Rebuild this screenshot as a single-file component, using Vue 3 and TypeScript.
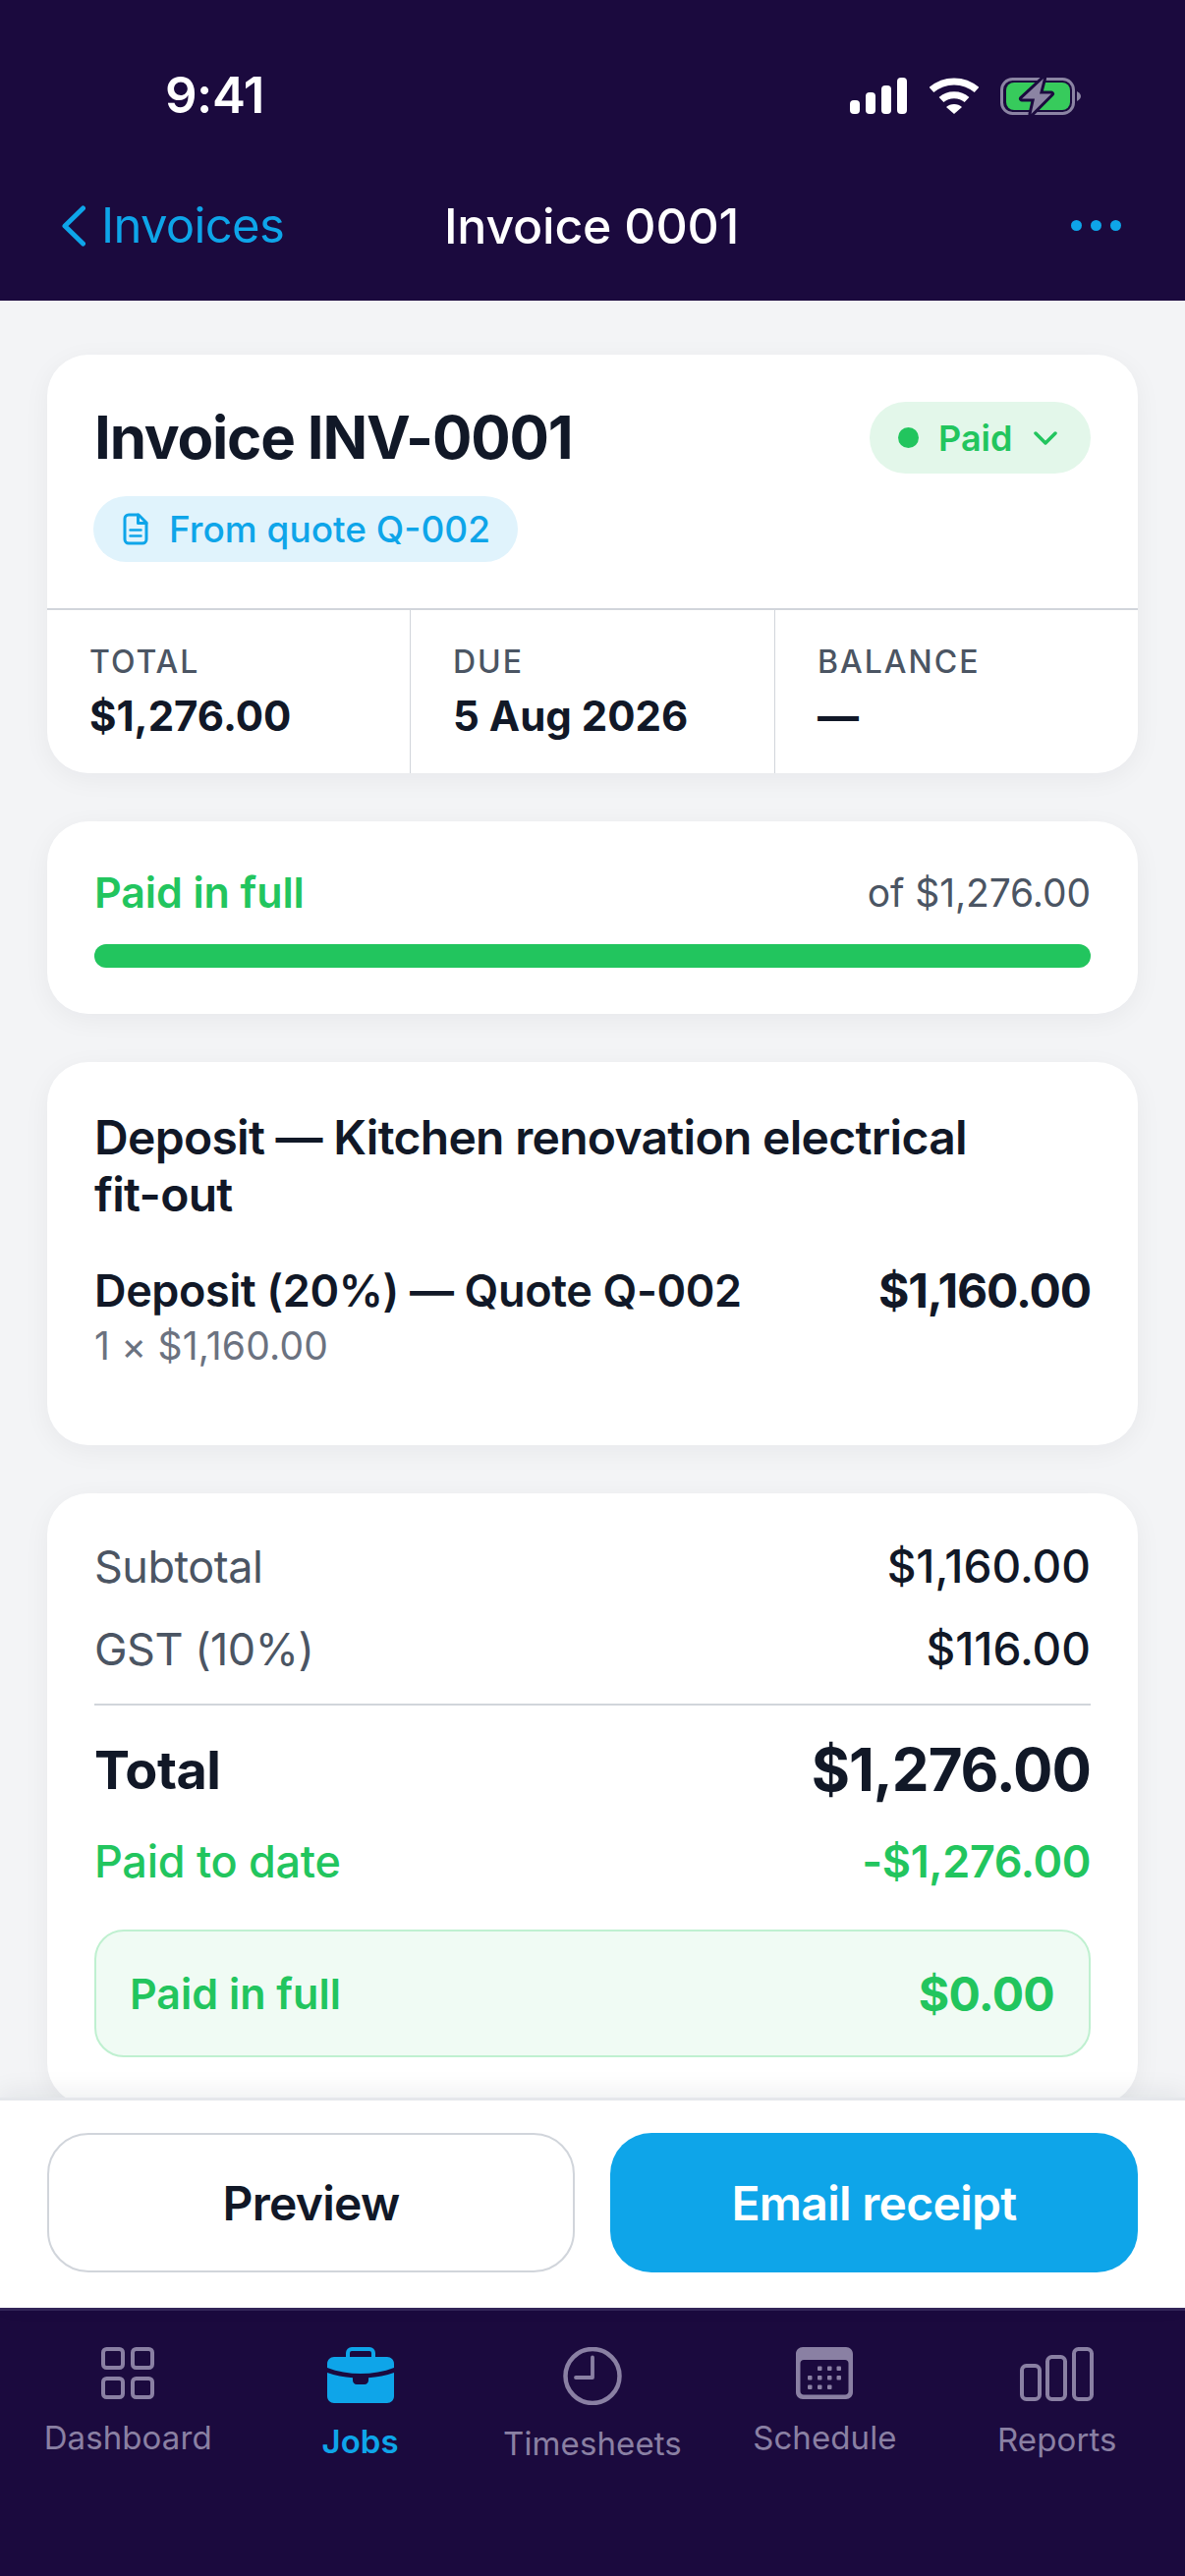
<script setup lang="ts">
interface Stat { label: string; value: string }
const stats: Stat[] = [
  { label: 'TOTAL', value: '$1,276.00' },
  { label: 'DUE', value: '5 Aug 2026' },
  { label: 'BALANCE', value: '—' },
]
</script>

<template>
  <div class="phone">
    <header class="top">
      <div class="status">
        <span class="time">9:41</span>
        <div class="status-icons">
          <svg class="sig" width="58" height="37" viewBox="0 0 58 37">
            <rect x="0" y="23" width="10" height="14" rx="4" fill="#fff" />
            <rect x="16" y="15" width="10" height="22" rx="4" fill="#fff" />
            <rect x="32" y="8" width="10" height="29" rx="4" fill="#fff" />
            <rect x="48" y="0" width="10" height="37" rx="4" fill="#fff" />
          </svg>
          <svg class="wifi" width="50" height="37" viewBox="0 0 50 37" fill="none">
            <path d="M2 12.500C15 1 35 1 48 12.500" stroke="#fff" stroke-width="7" stroke-linejoin="round" />
            <path d="M12 22.500C19 16 31 16 38 22.500" stroke="#fff" stroke-width="7" />
            <path d="M25 37L17 30C21 26 29 26 33 30Z" fill="#fff" />
          </svg>
          <svg class="batt" width="82" height="40" viewBox="0 0 82 40" fill="none">
            <rect x="1.500" y="2.500" width="73" height="35" rx="11" stroke="#8b84a3" stroke-width="3" />
            <rect x="6" y="6" width="65" height="28" rx="8" fill="#37cb5c" />
            <path d="M78 15C81 16.500 82 18.500 82 20C82 21.500 81 23.500 78 25Z" fill="#8b84a3" />
            <path d="M44 2L22 22.500H35L31.500 38L52 17.500H40Z" fill="#8b84a3" stroke="#1b0a3e" stroke-width="6" stroke-linejoin="round" paint-order="stroke" />
          </svg>
        </div>
      </div>
      <nav class="nav">
        <a class="back">
          <svg width="24" height="42" viewBox="0 0 24 42" fill="none">
            <path d="M21.500 3L3 21L21.500 39" stroke="#0ea5e9" stroke-width="5" stroke-linecap="round" stroke-linejoin="round" />
          </svg>
          <span>Invoices</span>
        </a>
        <span class="nav-title">Invoice 0001</span>
        <div class="more"><i></i><i></i><i></i></div>
      </nav>
    </header>

    <main class="content">
      <section class="card head-card">
        <div class="head-main">
          <div class="head-row">
            <h1>Invoice INV-0001</h1>
            <div class="status-pill">
              <i class="dot"></i>
              <span>Paid</span>
              <svg width="26" height="14" viewBox="0 0 26 14" fill="none">
                <path d="M3 2L13 12L23 2" stroke="#22c55e" stroke-width="3.500" stroke-linecap="round" stroke-linejoin="round" />
              </svg>
            </div>
          </div>
          <div class="quote-pill">
            <svg width="26" height="33" viewBox="0 0 26 33" fill="none" stroke="#0ea5e9" stroke-width="3" stroke-linejoin="round" stroke-linecap="round">
              <path d="M16 2H6C3.800 2 2 3.800 2 6V27C2 29.200 3.800 31 6 31H20C22.200 31 24 29.200 24 27V10Z" />
              <path d="M15.500 2V10.500H24" />
              <path d="M7.500 17.500H18.500M7.500 23.500H18.500" stroke-width="2.500" />
            </svg>
            <span>From quote Q-002</span>
          </div>
        </div>
        <div class="stats">
          <div v-for="s in stats" :key="s.label" class="stat">
            <div class="stat-label">{{ s.label }}</div>
            <div class="stat-value">{{ s.value }}</div>
          </div>
        </div>
      </section>

      <section class="card progress-card">
        <div class="progress-row">
          <span class="paid-label">Paid in full</span>
          <span class="of">of $1,276.00</span>
        </div>
        <div class="bar"></div>
      </section>

      <section class="card items-card">
        <h2>Deposit — Kitchen renovation electrical fit-out</h2>
        <div class="item-row">
          <span class="item-name">Deposit (20%) — Quote Q-002</span>
          <span class="item-price">$1,160.00</span>
        </div>
        <div class="item-sub">1 × $1,160.00</div>
      </section>

      <section class="card totals-card">
        <div class="line first"><span>Subtotal</span><b>$1,160.00</b></div>
        <div class="line"><span>GST (10%)</span><b>$116.00</b></div>
        <div class="sep"></div>
        <div class="grand"><span>Total</span><span>$1,276.00</span></div>
        <div class="paid-date"><span>Paid to date</span><b>-$1,276.00</b></div>
        <div class="paid-box"><span>Paid in full</span><b>$0.00</b></div>
      </section>
    </main>

    <div class="actions">
      <button class="btn ghost">Preview</button>
      <button class="btn primary">Email receipt</button>
    </div>

    <footer class="tabs">
      <div class="tab">
        <svg width="54" height="53" viewBox="0 0 54 53" fill="none" stroke="#8a80a3" stroke-width="4">
          <rect x="2" y="2" width="20" height="19" rx="3.500" />
          <rect x="32" y="2" width="20" height="19" rx="3.500" />
          <rect x="2" y="32" width="20" height="19" rx="3.500" />
          <rect x="32" y="32" width="20" height="19" rx="3.500" />
        </svg>
        <span>Dashboard</span>
      </div>
      <div class="tab active">
        <svg width="68" height="57" viewBox="0 0 68 57" fill="none">
          <path d="M21 11V6C21 3.800 22.800 2 25 2H43C45.200 2 47 3.800 47 6V11" stroke="#0ea5e9" stroke-width="4" />
          <path d="M7 10H61C64.900 10 68 13.100 68 17V21C47 29 21 29 0 21V17C0 13.100 3.100 10 7 10Z" fill="#0ea5e9" />
          <path d="M0 26C8 28.800 17 30.600 26 31.300V34C26 36.200 27.800 38 30 38H38C40.200 38 42 36.200 42 34V31.300C51 30.600 60 28.800 68 26V50C68 53.900 64.900 57 61 57H7C3.100 57 0 53.900 0 50Z" fill="#0ea5e9" />
        </svg>
        <span>Jobs</span>
      </div>
      <div class="tab">
        <svg width="60" height="59" viewBox="0 0 60 59" fill="none" stroke="#8a80a3" stroke-width="4.500" stroke-linecap="round" stroke-linejoin="round">
          <circle cx="30" cy="29.500" r="27.500" />
          <path d="M30 10.500V31H13" stroke-width="3.800" />
        </svg>
        <span>Timesheets</span>
      </div>
      <div class="tab">
        <svg width="58" height="53" viewBox="0 0 58 53" fill="none">
          <path d="M7 0H51C54.900 0 58 3.100 58 7V46C58 49.900 54.900 53 51 53H7C3.100 53 0 49.900 0 46V7C0 3.100 3.100 0 7 0ZM8 13C6 13 4.500 14.500 4.500 16.500V45C4.500 47 6 48.500 8 48.500H50C52 48.500 53.500 47 53.500 45V16.500C53.500 14.500 52 13 50 13Z" fill="#8a80a3" fill-rule="evenodd" />
          <g fill="#8a80a3">
            <rect x="22" y="19.500" width="4.500" height="4.500" rx="1" /><rect x="32" y="19.500" width="4.500" height="4.500" rx="1" /><rect x="41.500" y="19.500" width="4.500" height="4.500" rx="1" />
            <rect x="12" y="29" width="4.500" height="4.500" rx="1" /><rect x="22" y="29" width="4.500" height="4.500" rx="1" /><rect x="32" y="29" width="4.500" height="4.500" rx="1" /><rect x="41.500" y="29" width="4.500" height="4.500" rx="1" />
            <rect x="12" y="38.500" width="4.500" height="4.500" rx="1" /><rect x="22" y="38.500" width="4.500" height="4.500" rx="1" /><rect x="32" y="38.500" width="4.500" height="4.500" rx="1" />
          </g>
        </svg>
        <span>Schedule</span>
      </div>
      <div class="tab">
        <svg width="75" height="55" viewBox="0 0 75 55" fill="none" stroke="#8a80a3" stroke-width="4">
          <rect x="2" y="19" width="18" height="34" rx="4.500" />
          <rect x="28" y="10" width="18" height="43" rx="4.500" />
          <rect x="55" y="2" width="18" height="51" rx="4.500" />
        </svg>
        <span>Reports</span>
      </div>
    </footer>
  </div>
</template>

<style>
html, body { margin: 0; background: #f3f4f6; }
</style>

<style scoped>
.phone {
  width: 1206px;
  height: 2622px;
  display: flex;
  flex-direction: column;
  overflow: hidden;
  background: #f3f4f6;
  font-family: Inter, "Noto Sans", sans-serif;
  color: #111827;
}
.top {
  height: 306px;
  flex: none;
  background: #1b0a3e;
  display: flex;
  flex-direction: column;
}
.status {
  height: 183px;
  padding: 76px 106px 0 168px;
  box-sizing: border-box;
  display: flex;
  justify-content: space-between;
  align-items: flex-start;
}
.time {
  font-size: 51px;
  line-height: 42px;
  font-weight: 600;
  color: #fff;
  letter-spacing: -0.5px;
}
.status-icons {
  display: flex;
  align-items: flex-start;
  margin-top: 2px;
}
.sig { margin-top: 1px; }
.wifi { margin: 1px 22px 0 23px; }
.nav {
  flex: 1;
  padding: 0 65px 30px 63px;
  display: grid;
  grid-template-columns: 1fr auto 1fr;
  align-items: center;
}
.back {
  display: flex;
  align-items: center;
  gap: 16px;
  color: #0ea5e9;
  font-size: 49px;
  line-height: 58px;
  letter-spacing: -0.7px;
}
.nav-title {
  color: #fff;
  font-size: 50px;
  line-height: 58px;
  font-weight: 500;
  letter-spacing: -0.2px;
}
.more {
  display: flex;
  justify-content: flex-end;
  gap: 9px;
}
.more i {
  width: 11px;
  height: 11px;
  border-radius: 50%;
  background: #0ea5e9;
}
.content {
  flex: 1;
  min-height: 0;
  overflow: hidden;
  padding: 55px 48px 0;
  display: flex;
  flex-direction: column;
  gap: 49px;
}
.card {
  flex: none;
  background: #fff;
  border-radius: 42px;
  box-shadow: 0 6px 27px rgba(17, 24, 39, 0.05);
}
.head-main {
  height: 258px;
  box-sizing: border-box;
  padding: 48px 48px 0;
}
.head-row {
  display: flex;
  justify-content: space-between;
  align-items: flex-start;
}
h1 {
  margin: 0;
  font-size: 60px;
  line-height: 72px;
  font-weight: 700;
  letter-spacing: -1.2px;
}
.status-pill {
  height: 73px;
  width: 225px;
  box-sizing: border-box;
  padding-left: 29px;
  border-radius: 37px;
  background: #e3f7ea;
  color: #22c55e;
  font-size: 36px;
  font-weight: 600;
  display: flex;
  align-items: center;
}
.dot {
  width: 21px;
  height: 21px;
  border-radius: 50%;
  background: #22c55e;
  margin-right: 20px;
}
.status-pill svg { margin-left: 21px; }
.quote-pill {
  margin-top: 23px;
  width: 432px;
  height: 67px;
  box-sizing: border-box;
  padding-left: 30px;
  border-radius: 34px;
  background: #e0f3fc;
  color: #0ea5e9;
  font-size: 37px;
  font-weight: 500;
  display: flex;
  align-items: center;
  gap: 21px;
  margin-left: -1px;
}
.stats {
  display: grid;
  grid-template-columns: 369px 371px 1fr;
  border-top: 2px solid #d1d5db;
  height: 168px;
  box-sizing: border-box;
}
.stat {
  padding: 34px 0 0 43px;
  border-left: 1px solid #d1d5db;
}
.stat:first-child { border-left: 0; }
.stat-label {
  font-size: 32px;
  line-height: 38px;
  font-weight: 500;
  letter-spacing: 2px;
  color: #4b5563;
}
.stat-value {
  margin-top: 11px;
  font-size: 42px;
  line-height: 50px;
  font-weight: 700;
}
.progress-card {
  height: 196px;
  box-sizing: border-box;
  padding: 48px 48px 0;
}
.progress-row {
  display: flex;
  justify-content: space-between;
  align-items: center;
  height: 48px;
}
.paid-label {
  font-size: 43px;
  font-weight: 600;
  color: #22c55e;
  letter-spacing: -0.1px;
}
.of {
  font-size: 39px;
  color: #4b5563;
  letter-spacing: -0.1px;
}
.bar {
  margin-top: 29px;
  height: 24px;
  border-radius: 12px;
  background: #22c55e;
}
.items-card {
  height: 390px;
  box-sizing: border-box;
  padding: 48px;
}
h2 {
  margin: 0;
  font-size: 48px;
  line-height: 58px;
  font-weight: 600;
  letter-spacing: -0.7px;
  width: 950px;
}
.item-row {
  margin-top: 42px;
  display: flex;
  justify-content: space-between;
  align-items: center;
  font-size: 45px;
  line-height: 54px;
}
.item-name {
  font-weight: 600;
  letter-spacing: -0.37px;
}
.item-price {
  font-size: 48px;
  font-weight: 700;
  letter-spacing: -1.1px;
}
.item-sub {
  margin-top: 4px;
  font-size: 39px;
  line-height: 50px;
  color: #6b7280;
  letter-spacing: 0.2px;
}
.totals-card {
  box-sizing: border-box;
  padding: 46px 48px 48px;
}
.line {
  display: flex;
  justify-content: space-between;
  align-items: center;
  height: 56px;
  margin-top: 28px;
  font-size: 45px;
  letter-spacing: -0.5px;
  color: #4b5563;
}
.line.first { margin-top: 0; }
.line b {
  font-size: 46px;
  font-weight: 500;
  letter-spacing: 0;
  color: #111827;
}
.sep {
  height: 2px;
  margin-top: 28px;
  background: #d1d5db;
}
.grand {
  display: flex;
  justify-content: space-between;
  align-items: center;
  margin-top: 31px;
  height: 68px;
  font-size: 60px;
  font-weight: 700;
  letter-spacing: -1px;
}
.grand span:first-child {
  font-size: 54px;
  letter-spacing: -0.5px;
}
.paid-date {
  display: flex;
  justify-content: space-between;
  align-items: center;
  margin-top: 32px;
  height: 54px;
  font-size: 45px;
  color: #22c55e;
  font-weight: 500;
  letter-spacing: -0.3px;
}
.paid-date b {
  font-weight: 600;
  letter-spacing: -0.4px;
}
.paid-box {
  margin-top: 43px;
  height: 130px;
  box-sizing: border-box;
  padding: 0 35px 0 34px;
  border: 2px solid #bff0d0;
  border-radius: 30px;
  background: #f0fbf4;
  color: #22c55e;
  display: flex;
  justify-content: space-between;
  align-items: center;
  font-size: 43px;
  font-weight: 600;
}
.paid-box b {
  font-size: 48px;
  font-weight: 700;
  letter-spacing: -0.7px;
}
.actions {
  flex: none;
  position: relative;
  z-index: 1;
  height: 214px;
  box-sizing: border-box;
  padding: 33px 48px 0;
  background: #fff;
  border-top: 3px solid #e5e7eb;
  display: grid;
  grid-template-columns: 1fr 1fr;
  gap: 36px;
  box-shadow: 0 -6px 24px rgba(17, 24, 39, 0.07);
}
.btn {
  height: 142px;
  border-radius: 42px;
  font-family: inherit;
  font-size: 48px;
  font-weight: 600;
  letter-spacing: -0.7px;
  box-sizing: border-box;
  padding: 0;
}
.ghost {
  background: #fff;
  border: 2px solid #d1d5db;
  color: #111827;
}
.primary {
  background: #0ea5e9;
  border: 0;
  color: #fff;
}
.tabs {
  flex: none;
  height: 273px;
  box-sizing: border-box;
  background: #1b0a3e;
  border-top: 3px solid #33265a;
  padding: 37px 12px 0;
  display: grid;
  grid-template-columns: repeat(5, 1fr);
  align-items: start;
}
.tab {
  display: flex;
  flex-direction: column;
  align-items: center;
  gap: 19px;
  font-size: 33px;
  line-height: 40px;
  letter-spacing: 0.1px;
  color: #8a80a3;
}
.tab.active {
  color: #0ea5e9;
  font-weight: 600;
}
</style>
